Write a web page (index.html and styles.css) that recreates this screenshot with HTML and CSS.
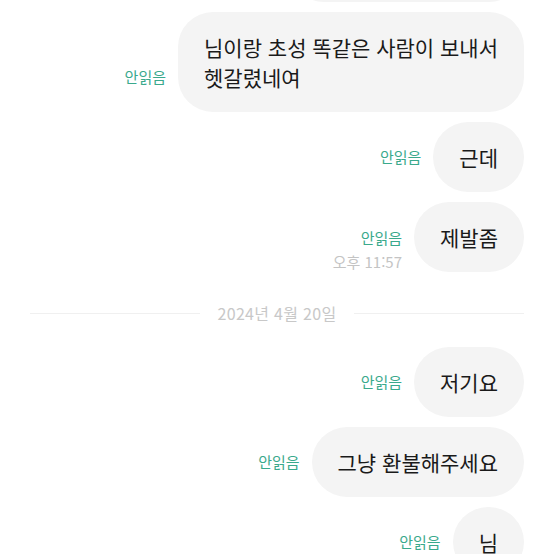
FILE: index.html
```html
<!DOCTYPE html>
<html lang="ko">

<head>
  <meta charset="UTF-8">
  <meta name="viewport" content="width=device-width, initial-scale=1.0">
  <title>채팅</title>
  <link rel="stylesheet" href="styles.css">
</head>

<body>
  <div class="chat">
    <!-- 위로 스크롤된 이전 메시지 -->
    <div class="row first">
      <div class="bubble placeholder"></div>
    </div>

    <div class="row">
      <div class="meta">
        <span class="unread">안읽음</span>
      </div>
      <div class="bubble">님이랑 초성 똑같은 사람이 보내서<br>헷갈렸네여</div>
    </div>

    <div class="row">
      <div class="meta">
        <span class="unread">안읽음</span>
      </div>
      <div class="bubble">근데</div>
    </div>

    <div class="row">
      <div class="meta has-time">
        <span class="unread">안읽음</span>
        <span class="time">오후 11:57</span>
      </div>
      <div class="bubble">제발좀</div>
    </div>

    <div class="date-divider">
      <span class="line"></span>
      <span class="date">2024년 4월 20일</span>
      <span class="line"></span>
    </div>

    <div class="row">
      <div class="meta">
        <span class="unread">안읽음</span>
      </div>
      <div class="bubble">저기요</div>
    </div>

    <div class="row">
      <div class="meta">
        <span class="unread">안읽음</span>
      </div>
      <div class="bubble">그냥 환불해주세요</div>
    </div>

    <div class="row">
      <div class="meta">
        <span class="unread">안읽음</span>
      </div>
      <div class="bubble">님</div>
    </div>
  </div>
</body>

</html>
```

FILE: styles.css
```css
body {
  font-family: 'Noto Sans CJK KR', 'Noto Sans', sans-serif;
  margin: 0;
  padding: 0;
  background-color: #fff;
  color: #1a1a1a;
  overflow: hidden;
}

.chat {
  display: flex;
  flex-direction: column;
  gap: 10px;
  padding: 0 30px;
}

.row {
  display: flex;
  justify-content: flex-end;
  align-items: flex-end;
  gap: 12px;
}

/* 이전 메시지는 아래쪽만 살짝 보임 */
.row.first {
  margin-top: -68px;
}

.bubble {
  background-color: #f4f4f4;
  border-radius: 35px;
  padding: 20px 26px;
  font-size: 21px;
  line-height: 30px;
  white-space: nowrap;
}

.bubble.placeholder {
  width: 183px;
  height: 30px;
}

.meta {
  display: flex;
  flex-direction: column;
  align-items: flex-end;
  gap: 4px;
  padding-bottom: 25px;
  font-size: 15px;
  line-height: 20px;
}

.meta.has-time {
  padding-bottom: 0;
}

.unread {
  color: #3aa98c;
}

.time {
  color: #c4c4c4;
}

.date-divider {
  display: flex;
  align-items: center;
  gap: 18px;
  padding: 21px 0 14px;
}

.date-divider .line {
  flex: 1;
  height: 1px;
  background-color: #f0f0f0;
}

.date {
  font-size: 16px;
  line-height: 20px;
  color: #c8c8c8;
  letter-spacing: 0.3px;
}
```
